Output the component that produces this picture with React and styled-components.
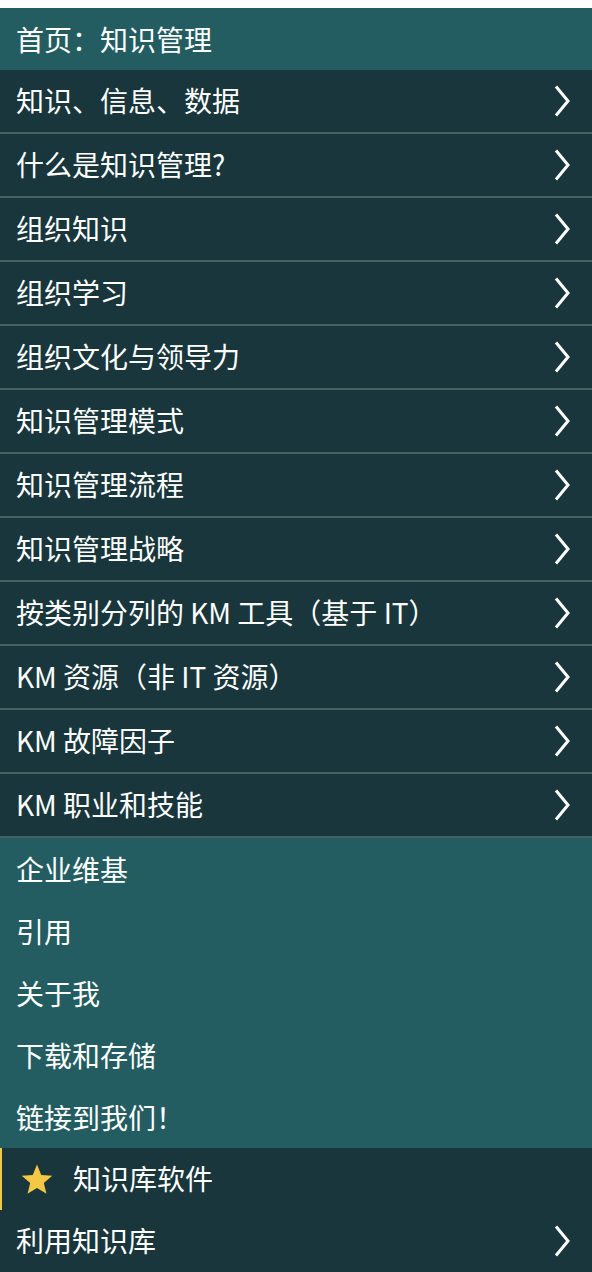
import React from 'react'
import styled, { createGlobalStyle, css } from 'styled-components'

const GlobalStyle = createGlobalStyle`
  body {
    margin: 0;
    padding-top: 8px;
    background: #ffffff;
    font-family: "Noto Sans CJK SC", "Noto Sans", sans-serif;
  }
`

const topics = [
  '知识、信息、数据',
  '什么是知识管理?',
  '组织知识',
  '组织学习',
  '组织文化与领导力',
  '知识管理模式',
  '知识管理流程',
  '知识管理战略',
  '按类别分列的 KM 工具（基于 IT）',
  'KM 资源（非 IT 资源）',
  'KM 故障因子',
  'KM 职业和技能',
]

const links = ['企业维基', '引用', '关于我', '下载和存储', '链接到我们！']

export default function App() {
  return (
    <>
      <GlobalStyle />
      <Nav>
        <Header>首页：知识管理</Header>
        <List>
          {topics.map((t) => (
            <TopicRow key={t}>
              <Label>{t}</Label>
              <Chevron />
            </TopicRow>
          ))}
        </List>
        <LinkGroup>
          {links.map((l) => (
            <LinkRow key={l}>{l}</LinkRow>
          ))}
        </LinkGroup>
        <FeatureRow>
          <Star viewBox="0 0 24 24">
            <path d="M12 1.8l3 7.3 7.8.6-6 5.1 1.9 7.6L12 18.3l-6.7 4.1 1.9-7.6-6-5.1 7.8-.6z" fill="#f2c844" />
          </Star>
          <Label>知识库软件</Label>
        </FeatureRow>
        <TopicRow $last>
          <Label>利用知识库</Label>
          <Chevron />
        </TopicRow>
      </Nav>
    </>
  )
}

function Chevron() {
  return (
    <ChevronSvg viewBox="0 0 16 32">
      <path d="M2 1.5L14 16 2 30.5" fill="none" stroke="#ffffff" strokeWidth="3" />
    </ChevronSvg>
  )
}

const Nav = styled.nav`
  display: flex;
  flex-direction: column;
  width: 592px;
  color: #ffffff;
`

const rowText = css`
  font-size: 28px;
  line-height: 1;
  color: #ffffff;
`

const Header = styled.div`
  ${rowText}
  height: 62px;
  display: flex;
  align-items: center;
  padding-left: 16px;
  background: #235d61;
`

const List = styled.div`
  display: flex;
  flex-direction: column;
`

const TopicRow = styled.div`
  ${rowText}
  height: 62px;
  display: flex;
  align-items: center;
  justify-content: space-between;
  padding: 0 22px 0 16px;
  background: #18363b;
  border-bottom: ${(p) => (p.$last ? 'none' : '2px solid #44625f')};
`

const Label = styled.span`
  white-space: nowrap;
  margin-top: -2px;
`

const ChevronSvg = styled.svg`
  width: 16px;
  height: 32px;
  flex-shrink: 0;
`

const LinkGroup = styled.div`
  display: flex;
  flex-direction: column;
  background: #235d61;
`

const LinkRow = styled.div`
  ${rowText}
  height: 62px;
  display: flex;
  align-items: center;
  padding-left: 16px;
`

const FeatureRow = styled.div`
  ${rowText}
  height: 62px;
  display: flex;
  align-items: center;
  gap: 19px;
  padding-left: 18px;
  background: #18363b;
  border-left: 2px solid #f2c844;
`

const Star = styled.svg`
  width: 34px;
  height: 34px;
  flex-shrink: 0;
`
